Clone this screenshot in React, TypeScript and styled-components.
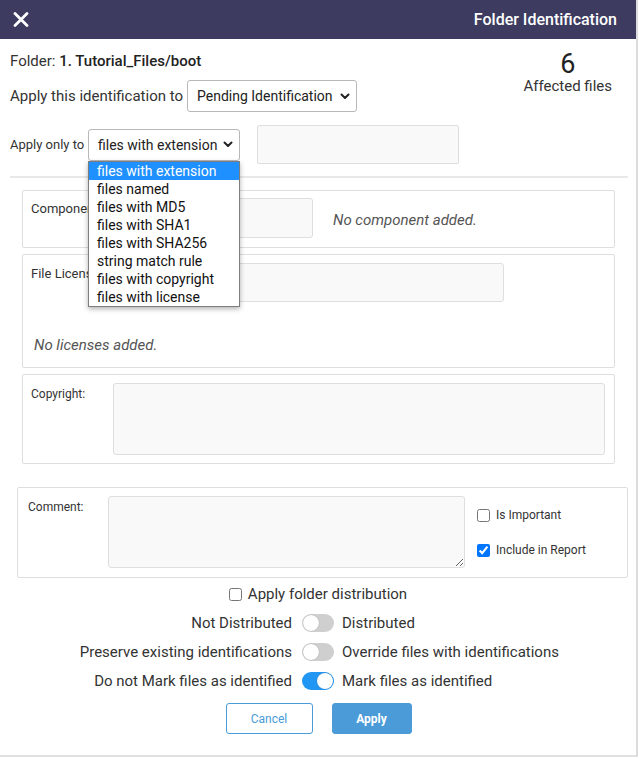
import React from "react";
import styled, { createGlobalStyle } from "styled-components";

const GlobalStyle = createGlobalStyle`
  html, body { margin: 0; padding: 0; background: #ffffff; }
  body { font-family: Roboto, "Noto Sans", sans-serif; color: #333333; }
  * { box-sizing: border-box; }
`;

const Dialog = styled.div`
  width: 638px;
  height: 757px;
  border-right: 2px solid #dcdcdc;
  border-bottom: 2px solid #e0e0e0;
  display: flex;
  flex-direction: column;
  background: #fff;
`;

const Header = styled.header`
  height: 39px;
  flex: none;
  background: #3d3b60;
  display: flex;
  align-items: center;
  justify-content: space-between;
  padding: 0 19px 0 13px;
`;

const CloseButton = styled.button`
  border: 0;
  background: transparent;
  padding: 0;
  width: 16px;
  height: 16px;
  display: flex;
  align-items: center;
  justify-content: center;
  cursor: pointer;
`;

const HeaderTitle = styled.h1`
  margin: 0;
  color: #fff;
  font-size: 16px;
  font-weight: 500;
`;

const TopSection = styled.section`
  padding: 0 8px 0 10px;
`;

const InfoRow = styled.div`
  display: flex;
  justify-content: space-between;
  align-items: flex-start;
`;

const InfoMain = styled.div`
  display: flex;
  flex-direction: column;
`;

const FolderLine = styled.div`
  margin-top: 12px;
  font-size: 15px;
  line-height: 20px;
`;

const FolderName = styled.span`
  font-weight: 500;
  color: #222;
`;

const ApplyRow = styled.div`
  margin-top: 9px;
  display: flex;
  align-items: center;
  gap: 4px;
  font-size: 15px;
`;

const Affected = styled.div`
  margin-top: 13px;
  margin-right: 16px;
  display: flex;
  flex-direction: column;
  align-items: center;
`;

const AffectedCount = styled.div`
  font-size: 27px;
  line-height: 25px;
  color: #222;
`;

const AffectedLabel = styled.div`
  font-size: 15px;
  line-height: 18px;
`;

const SelectWrap = styled.div`
  position: relative;
`;

const SelectBox = styled.div<{ $w: number; $h: number }>`
  width: ${(p) => p.$w}px;
  height: ${(p) => p.$h}px;
  border: 1px solid #b8b8b8;
  border-radius: 3px;
  background: #fff;
  display: flex;
  align-items: center;
  justify-content: space-between;
  padding: 0 6px 0 9px;
  font-size: 14px;
  white-space: nowrap;
  color: #222;
`;

const FilterRow = styled.div`
  margin-top: 13px;
  display: flex;
  align-items: center;
`;

const FilterLabel = styled.span`
  font-size: 13px;
  width: 78px;
  flex: none;
`;

const ValueInput = styled.div`
  margin-left: 17px;
  width: 202px;
  height: 39px;
  background: #f9f9f9;
  border: 1px solid #dedede;
  border-radius: 2px;
`;

const Divider = styled.hr`
  margin: 12px 0 0 0;
  border: 0;
  border-top: 2px solid #e8e8e8;
`;

const Dropdown = styled.ul`
  position: absolute;
  left: 0;
  top: 32px;
  width: 152px;
  margin: 0;
  padding: 0;
  list-style: none;
  background: #fff;
  border: 1px solid #7d7d7d;
  box-shadow: 0 2px 5px rgba(0, 0, 0, 0.3);
  z-index: 10;
`;

const DropdownItem = styled.li<{ $active?: boolean }>`
  height: 18px;
  line-height: 18px;
  padding-left: 8px;
  font-size: 14px;
  white-space: nowrap;
  color: ${(p) => (p.$active ? "#fff" : "#111")};
  background: ${(p) => (p.$active ? "#1e90ff" : "transparent")};
`;

const Boxes = styled.div`
  margin: 12px 21px 0 22px;
  display: flex;
  flex-direction: column;
  gap: 6px;
`;

const Panel = styled.div<{ $pt?: number; $pb?: number }>`
  border: 1px solid #dedede;
  border-radius: 2px;
  padding: ${(p) => p.$pt ?? 8}px 10px ${(p) => p.$pb ?? 8}px 8px;
  display: flex;
  flex-direction: column;
`;

const FieldRow = styled.div`
  display: flex;
  align-items: flex-start;
`;

const FieldLabel = styled.label<{ $fs: number; $w: number }>`
  width: ${(p) => p.$w}px;
  flex: none;
  font-size: ${(p) => p.$fs}px;
  line-height: 18px;
  padding-top: 2px;
  white-space: nowrap;
  color: #333;
`;

const GreyField = styled.div<{ $w: number; $h: number }>`
  width: ${(p) => p.$w}px;
  height: ${(p) => p.$h}px;
  background: #f9f9f9;
  border: 1px solid #dedede;
  border-radius: 3px;
  flex: none;
`;

const EmptyNote = styled.span<{ $mt?: number; $ml?: number }>`
  font-size: 15px;
  font-style: italic;
  color: #555;
  line-height: 20px;
  margin-top: ${(p) => p.$mt ?? 0}px;
  margin-left: ${(p) => p.$ml ?? 0}px;
`;

const CommentPanel = styled.div`
  margin: 23px 8px 0 17px;
  border: 1px solid #dedede;
  border-radius: 2px;
  padding: 8px 10px 9px 10px;
  display: flex;
  align-items: flex-start;
`;

const CommentArea = styled.textarea`
  width: 357px;
  height: 72px;
  flex: none;
  background: #f9f9f9;
  border: 1px solid #dedede;
  border-radius: 3px;
  margin: 0;
  font-family: inherit;
`;

const CheckColumn = styled.div`
  margin-left: 12px;
  padding-top: 10px;
  display: flex;
  flex-direction: column;
  gap: 17px;
`;

const CheckLabel = styled.label<{ $fs: number }>`
  display: flex;
  align-items: center;
  gap: 6px;
  font-size: ${(p) => p.$fs}px;
  line-height: 18px;
  color: #333;
  input {
    margin: 0;
    width: 13px;
    height: 13px;
  }
`;

const Options = styled.div`
  margin-top: 7px;
  display: flex;
  flex-direction: column;
  align-items: center;
`;

const ToggleList = styled.div`
  margin-top: 10px;
  width: 100%;
  display: flex;
  flex-direction: column;
  gap: 9px;
`;

const ToggleRow = styled.div`
  display: grid;
  grid-template-columns: 1fr 32px 1fr;
  align-items: center;
  font-size: 15px;
  line-height: 20px;
`;

const ToggleLeft = styled.span`
  text-align: right;
  padding-right: 10px;
  white-space: nowrap;
`;

const ToggleRight = styled.span`
  padding-left: 8px;
  white-space: nowrap;
`;

const Switch = styled.span<{ $on?: boolean }>`
  position: relative;
  width: 32px;
  height: 18px;
  border-radius: 9px;
  background: ${(p) => (p.$on ? "#2196f3" : "#cfcfcf")};
  &::after {
    content: "";
    position: absolute;
    top: 1px;
    left: ${(p) => (p.$on ? "15px" : "1px")};
    width: 16px;
    height: 16px;
    border-radius: 50%;
    background: #fff;
    box-shadow: 0 0 1px rgba(0, 0, 0, 0.35);
  }
`;

const Buttons = styled.div`
  margin-top: 12px;
  display: flex;
  justify-content: center;
  gap: 19px;
  padding-left: 1px;
`;

const Button = styled.button<{ $primary?: boolean }>`
  height: 31px;
  width: ${(p) => (p.$primary ? 80 : 87)}px;
  border-radius: 3px;
  font-family: Roboto, sans-serif;
  font-size: 12px;
  font-weight: ${(p) => (p.$primary ? 700 : 400)};
  border: 1px solid #4a9bd8;
  background: ${(p) => (p.$primary ? "#4a9bd8" : "#fff")};
  color: ${(p) => (p.$primary ? "#fff" : "#4a9bd8")};
  cursor: pointer;
`;

const Chevron = () => (
  <svg width="10" height="7" viewBox="0 0 10 7" fill="none">
    <path d="M1.5 1.5 L5 5 L8.5 1.5" stroke="#222" strokeWidth="2" strokeLinecap="round" strokeLinejoin="round" />
  </svg>
);

const options = [
  "files with extension",
  "files named",
  "files with MD5",
  "files with SHA1",
  "files with SHA256",
  "string match rule",
  "files with copyright",
  "files with license",
];

const toggles = [
  { left: "Not Distributed", right: "Distributed", on: false },
  { left: "Preserve existing identifications", right: "Override files with identifications", on: false },
  { left: "Do not Mark files as identified", right: "Mark files as identified", on: true },
];

export default function App() {
  return (
    <>
      <GlobalStyle />
      <Dialog>
        <Header>
          <CloseButton aria-label="Close">
            <svg width="16" height="15" viewBox="0 0 16 15">
              <path d="M2 1.5 L14 13.5 M14 1.5 L2 13.5" stroke="#fff" strokeWidth="2.8" strokeLinecap="round" />
            </svg>
          </CloseButton>
          <HeaderTitle>Folder Identification</HeaderTitle>
        </Header>

        <TopSection>
          <InfoRow>
            <InfoMain>
              <FolderLine>
                Folder: <FolderName>1. Tutorial_Files/boot</FolderName>
              </FolderLine>
              <ApplyRow>
                Apply this identification to
                <SelectBox $w={170} $h={32}>
                  Pending Identification
                  <Chevron />
                </SelectBox>
              </ApplyRow>
            </InfoMain>
            <Affected>
              <AffectedCount>6</AffectedCount>
              <AffectedLabel>Affected files</AffectedLabel>
            </Affected>
          </InfoRow>

          <FilterRow>
            <FilterLabel>Apply only to</FilterLabel>
            <SelectWrap>
              <SelectBox $w={152} $h={32}>
                files with extension
                <Chevron />
              </SelectBox>
              <Dropdown>
                {options.map((o, i) => (
                  <DropdownItem key={o} $active={i === 0}>
                    {o}
                  </DropdownItem>
                ))}
              </Dropdown>
            </SelectWrap>
            <ValueInput />
          </FilterRow>
          <Divider />
        </TopSection>

        <Boxes>
          <Panel $pt={7} $pb={9}>
            <FieldRow>
              <FieldLabel $fs={13} $w={82}>Component:</FieldLabel>
              <GreyField $w={200} $h={40} />
              <EmptyNote $ml={20} $mt={12}>No component added.</EmptyNote>
            </FieldRow>
          </Panel>
          <Panel $pt={8} $pb={12}>
            <FieldRow>
              <FieldLabel $fs={13} $w={82}>File License:</FieldLabel>
              <GreyField $w={391} $h={39} />
            </FieldRow>
            <EmptyNote $mt={33} $ml={3}>No licenses added.</EmptyNote>
          </Panel>
          <Panel $pt={8} $pb={8}>
            <FieldRow>
              <FieldLabel $fs={12} $w={82}>Copyright:</FieldLabel>
              <GreyField $w={492} $h={72} />
            </FieldRow>
          </Panel>
        </Boxes>

        <CommentPanel>
          <FieldLabel $fs={12} $w={80}>Comment:</FieldLabel>
          <CommentArea />
          <CheckColumn>
            <CheckLabel $fs={12}>
              <input type="checkbox" /> Is Important
            </CheckLabel>
            <CheckLabel $fs={12}>
              <input type="checkbox" defaultChecked /> Include in Report
            </CheckLabel>
          </CheckColumn>
        </CommentPanel>

        <Options>
          <CheckLabel $fs={15}>
            <input type="checkbox" /> Apply folder distribution
          </CheckLabel>
          <ToggleList>
            {toggles.map((t) => (
              <ToggleRow key={t.left}>
                <ToggleLeft>{t.left}</ToggleLeft>
                <Switch $on={t.on} />
                <ToggleRight>{t.right}</ToggleRight>
              </ToggleRow>
            ))}
          </ToggleList>
          <Buttons>
            <Button>Cancel</Button>
            <Button $primary>Apply</Button>
          </Buttons>
        </Options>
      </Dialog>
    </>
  );
}
